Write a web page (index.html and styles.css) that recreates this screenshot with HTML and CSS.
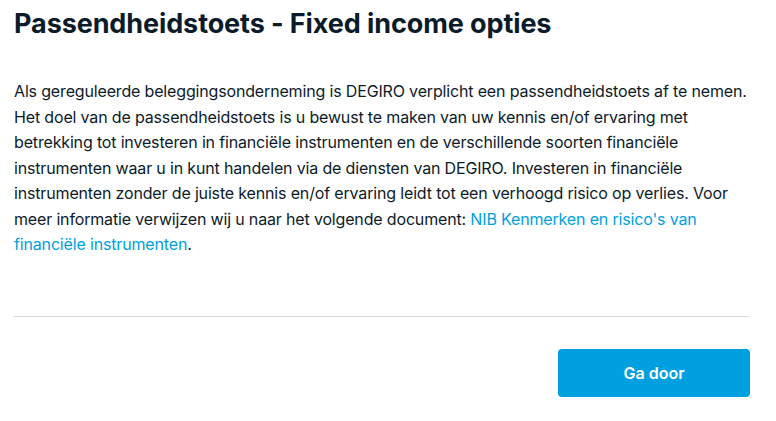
FILE: index.html
```html
<!DOCTYPE html>
<html lang="nl">
<head>
    <meta charset="UTF-8">
    <title>Passendheidstoets - Fixed income opties</title>
    <link rel="stylesheet" href="styles.css">
</head>
<body>
    <div class="container">
        <h1>Passendheidstoets - Fixed income opties</h1>
        <p class="intro">Als gereguleerde beleggingsonderneming is DEGIRO verplicht een passendheidstoets af te nemen. Het doel van de passendheidstoets is u bewust te maken van uw kennis en/of ervaring met betrekking tot investeren in financiële instrumenten en de verschillende soorten financiële instrumenten waar u in kunt handelen via de diensten van DEGIRO. Investeren in financiële instrumenten zonder de juiste kennis en/of ervaring leidt tot een verhoogd risico op verlies. Voor meer informatie verwijzen wij u naar het volgende document: <a href="#">NIB Kenmerken en risico's van financiële instrumenten</a>.</p>
        <div class="footer">
            <button class="btn-primary">Ga door</button>
        </div>
    </div>
</body>
</html>
```

FILE: styles.css
```css
body {
    font-family: Inter, "Noto Sans", sans-serif;
    margin: 0;
    background-color: #fff;
    color: #0c1b29;
}
.container {
    padding: 7px 26px 0 14px;
}
h1 {
    font-size: 27px;
    font-weight: 700;
    line-height: 34px;
    margin: 0;
    letter-spacing: -0.1px;
}
.intro {
    font-size: 16px;
    line-height: 25.5px;
    letter-spacing: -0.16px;
    margin: 38px 0 0;
}
.intro a {
    color: #009fdf;
    text-decoration: none;
}
.footer {
    margin-top: 58px;
    border-top: 1px solid #dcdcdc;
    padding-top: 32px;
    display: flex;
    justify-content: flex-end;
}
.btn-primary {
    width: 192px;
    height: 48px;
    background-color: #009fdf;
    color: #fff;
    border: none;
    border-radius: 4px;
    font-family: inherit;
    font-size: 16px;
    font-weight: 600;
    cursor: pointer;
}
```
